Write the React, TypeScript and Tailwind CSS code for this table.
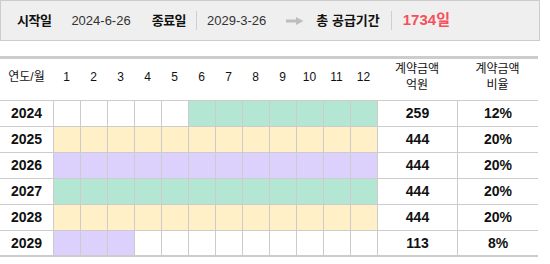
import React from "react";

type Fill = "g" | "y" | "p" | "w";

const rows: { year: string; cells: Fill[]; amount: string; ratio: string }[] = [
  { year: "2024", cells: ["w", "w", "w", "w", "w", "g", "g", "g", "g", "g", "g", "g"], amount: "259", ratio: "12%" },
  { year: "2025", cells: Array(12).fill("y"), amount: "444", ratio: "20%" },
  { year: "2026", cells: Array(12).fill("p"), amount: "444", ratio: "20%" },
  { year: "2027", cells: Array(12).fill("g"), amount: "444", ratio: "20%" },
  { year: "2028", cells: Array(12).fill("y"), amount: "444", ratio: "20%" },
  { year: "2029", cells: ["p", "p", "p", "w", "w", "w", "w", "w", "w", "w", "w", "w"], amount: "113", ratio: "8%" },
];

const fillClass: Record<Fill, string> = {
  g: "bg-[#b4e6d4]",
  y: "bg-[#fff0c7]",
  p: "bg-[#dcd0fc]",
  w: "bg-white",
};

function Sep() {
  return <span className="w-px h-[19px] bg-[#cfcfcf]" />;
}

export default function App() {
  const font = { fontFamily: "'Liberation Sans', 'Noto Sans CJK KR', sans-serif" };

  return (
    <div className="w-[550px] h-[264px] bg-white text-[#111] overflow-hidden" style={font}>
      {/* 상단 요약 */}
      <div className="w-[540px] h-[41px] bg-[#efefef] border border-[#cccccc] flex items-center pl-[16px]">
        <span className="text-[13px] font-bold tracking-[-0.5px]">시작일</span>
        <span className="ml-[10px]"><Sep /></span>
        <span className="ml-[10px] text-[13px] text-[#333]">2024-6-26</span>
        <span className="ml-[21px] text-[13px] font-bold tracking-[-0.5px]">종료일</span>
        <span className="ml-[10px] flex"><Sep /></span>
        <span className="ml-[10px] text-[13px] text-[#333]">2029-3-26</span>
        <svg className="ml-[20px]" width="18" height="8" viewBox="0 0 18 8">
          <rect x="0" y="2.5" width="11" height="3" fill="#bdbdbd" />
          <polygon points="10,0 17.5,4 10,8" fill="#bdbdbd" />
        </svg>
        <span className="ml-[12px] text-[13px] font-bold">총 공급기간</span>
        <span className="ml-[11px] flex"><Sep /></span>
        <span className="ml-[11px] text-[15px] font-bold text-[#f5505c]">1734일</span>
      </div>

      {/* 연도별 표 */}
      <div className="mt-[15px] w-[538px] border-t-[3px] border-[#cccccc] grid grid-cols-[53px_repeat(12,27px)_80px_81px]">
        <div className="h-[42px] border-b border-[#cccccc] flex items-center justify-center pb-[6px] text-[12px]">연도/월</div>
        {Array.from({ length: 12 }, (_, i) => (
          <div key={i} className="h-[42px] border-b border-[#cccccc] flex items-center justify-center pb-[6px] text-[12px]">
            {i + 1}
          </div>
        ))}
        <div className="h-[42px] border-b border-[#cccccc] flex flex-col items-center justify-center pb-[6px] text-[12px] leading-[16px]">
          <span>계약금액</span>
          <span>억원</span>
        </div>
        <div className="h-[42px] border-b border-[#cccccc] flex flex-col items-center justify-center pb-[6px] text-[12px] leading-[16px]">
          <span>계약금액</span>
          <span>비율</span>
        </div>

        {rows.map((r, ri) => {
          const last = ri === rows.length - 1;
          const b = last ? "border-b-2" : "border-b";
          return (
            <React.Fragment key={r.year}>
              <div className={`h-[26px] ${b} border-[#cccccc] flex items-center justify-center text-[14px] font-bold`}>
                {r.year}
              </div>
              {r.cells.map((c, ci) => (
                <div key={ci} className={`h-[26px] ${b} border-l border-[#cccccc] ${fillClass[c]}`} />
              ))}
              <div className={`h-[26px] ${b} border-l border-[#cccccc] flex items-center justify-center text-[14px] font-bold`}>
                {r.amount}
              </div>
              <div className={`h-[26px] ${b} border-l border-[#cccccc] flex items-center justify-center text-[14px] font-bold`}>
                {r.ratio}
              </div>
            </React.Fragment>
          );
        })}
      </div>
    </div>
  );
}
